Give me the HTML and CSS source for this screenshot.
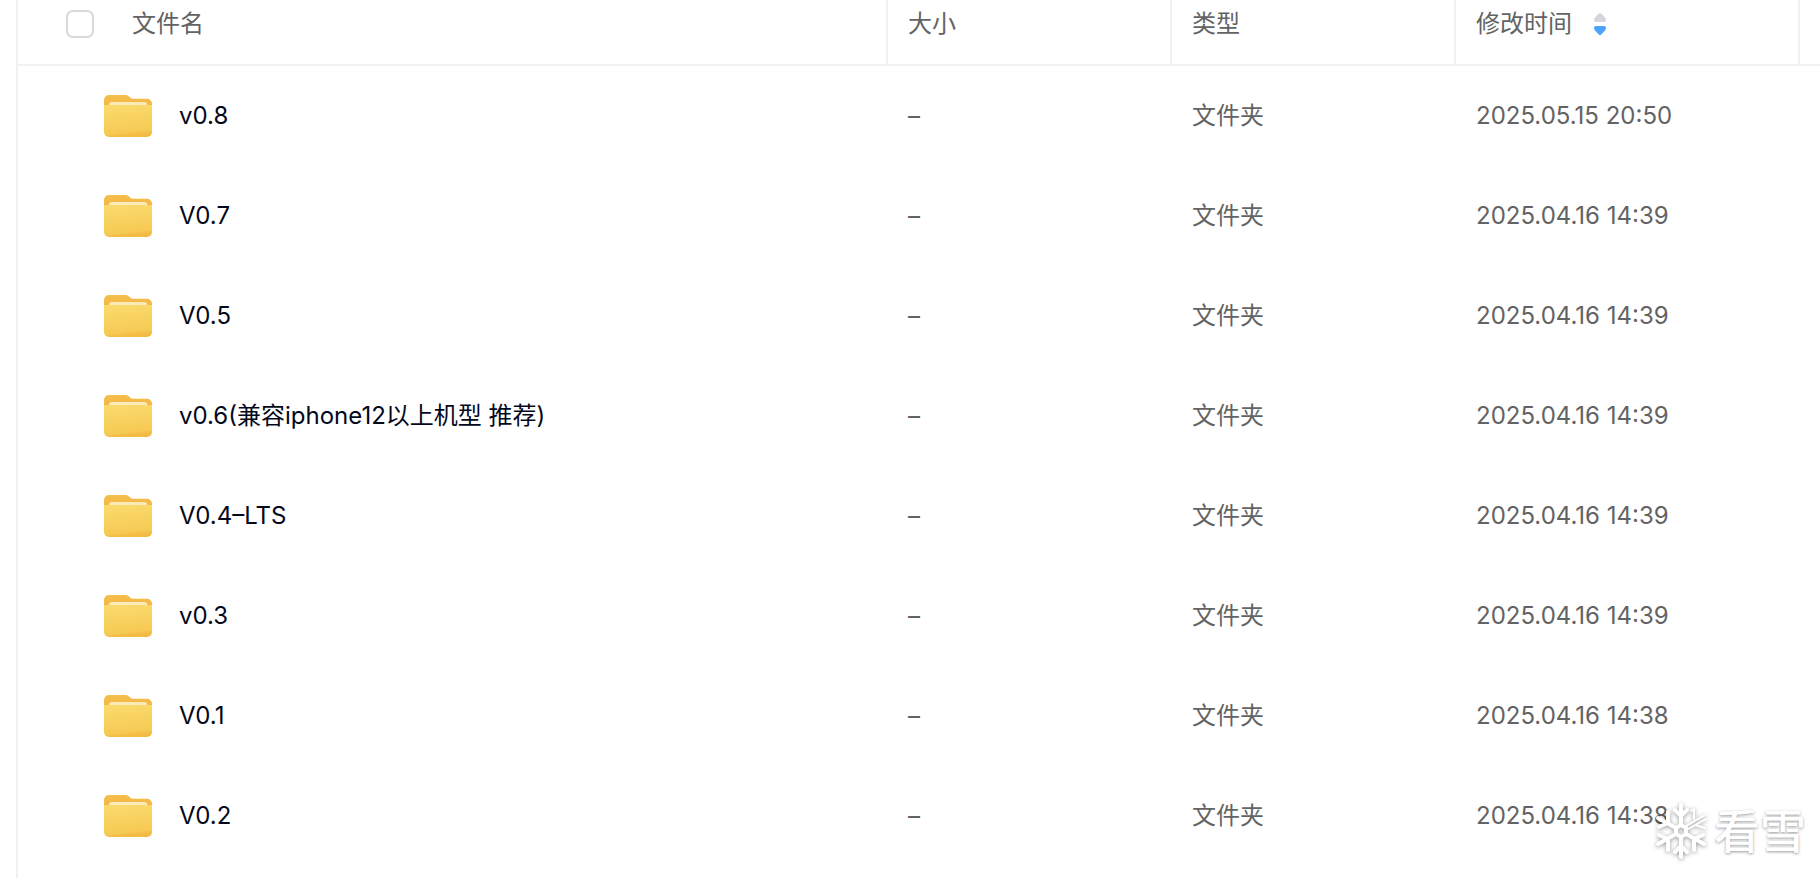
FILE: index.html
```html
<!DOCTYPE html>
<html lang="zh-CN">
<head>
    <meta charset="UTF-8">
    <meta name="viewport" content="width=device-width, initial-scale=1.0">
    <title>文件列表</title>
    <link rel="stylesheet" href="styles.css">
</head>
<body>
    <!-- shared folder icon -->
    <svg class="sprite" width="0" height="0" aria-hidden="true">
        <defs>
            <linearGradient id="folder-back" x1="0" y1="0" x2="0" y2="1">
                <stop offset="0" stop-color="#f6be4b"/>
                <stop offset="1" stop-color="#f0b040"/>
            </linearGradient>
            <linearGradient id="folder-front" x1="0" y1="0" x2="0.15" y2="1">
                <stop offset="0" stop-color="#fadb6e"/>
                <stop offset="0.9" stop-color="#f6ca54"/>
                <stop offset="1" stop-color="#f3bb45"/>
            </linearGradient>
        </defs>
        <symbol id="folder" viewBox="0 0 48 42">
            <path fill="url(#folder-back)" d="M0 5a5 5 0 0 1 5-5h16c2 0 3 .5 4.300 1.700l1.200 1.100c.7.700 1.500.9 2.500.9h14a5 5 0 0 1 5 5V20H0z"/>
            <path fill="#fcebb8" d="M5 10c0-2 1-3 3-3h32c2 0 3 1 3.500 3v3H5z"/>
            <path fill="url(#folder-front)" d="M0 10h48v27a5 5 0 0 1-5 5H5a5 5 0 0 1-5-5z"/>
        </symbol>
    </svg>

    <main class="panel">
        <table class="file-table">
            <colgroup>
                <col>
                <col class="col-size">
                <col class="col-type">
                <col class="col-time">
                <col class="col-end">
            </colgroup>
            <thead>
                <tr>
                    <th>
                        <div class="head-name">
                            <input type="checkbox" id="check-all" class="check">
                            <label for="check-all">文件名</label>
                        </div>
                    </th>
                    <th>大小</th>
                    <th>类型</th>
                    <th>
                        <button type="button" class="sort">
                            修改时间
                            <svg class="sort-icon" width="12" height="22" viewBox="0 0 12 22" aria-hidden="true">
                                <path fill="#d4d6dc" d="M4.800.6q1.200-1 2.400 0L11 4.600q1 1.100 1 2.300 0 2.100-2 2.100H2Q0 9 0 6.900 0 5.700 1 4.600z"/>
                                <path fill="#4ba3fb" d="M4.800 21.400q1.200 1 2.400 0l3.800-4q1-1.100 1-2.300 0-2.100-2-2.100H2q-2 0-2 2.100 0 1.200 1 2.300z"/>
                            </svg>
                        </button>
                    </th>
                    <th></th>
                </tr>
            </thead>
            <tbody>
                <tr>
                    <td><a href="#" class="file"><svg class="icon"><use href="#folder"/></svg>v0.8</a></td>
                    <td>–</td><td>文件夹</td><td>2025.05.15 20:50</td><td></td>
                </tr>
                <tr>
                    <td><a href="#" class="file"><svg class="icon"><use href="#folder"/></svg>V0.7</a></td>
                    <td>–</td><td>文件夹</td><td>2025.04.16 14:39</td><td></td>
                </tr>
                <tr>
                    <td><a href="#" class="file"><svg class="icon"><use href="#folder"/></svg>V0.5</a></td>
                    <td>–</td><td>文件夹</td><td>2025.04.16 14:39</td><td></td>
                </tr>
                <tr>
                    <td><a href="#" class="file"><svg class="icon"><use href="#folder"/></svg>v0.6(兼容iphone12以上机型 推荐)</a></td>
                    <td>–</td><td>文件夹</td><td>2025.04.16 14:39</td><td></td>
                </tr>
                <tr>
                    <td><a href="#" class="file"><svg class="icon"><use href="#folder"/></svg>V0.4–LTS</a></td>
                    <td>–</td><td>文件夹</td><td>2025.04.16 14:39</td><td></td>
                </tr>
                <tr>
                    <td><a href="#" class="file"><svg class="icon"><use href="#folder"/></svg>v0.3</a></td>
                    <td>–</td><td>文件夹</td><td>2025.04.16 14:39</td><td></td>
                </tr>
                <tr>
                    <td><a href="#" class="file"><svg class="icon"><use href="#folder"/></svg>V0.1</a></td>
                    <td>–</td><td>文件夹</td><td>2025.04.16 14:38</td><td></td>
                </tr>
                <tr>
                    <td><a href="#" class="file"><svg class="icon"><use href="#folder"/></svg>V0.2</a></td>
                    <td>–</td><td>文件夹</td><td>2025.04.16 14:38</td><td></td>
                </tr>
            </tbody>
        </table>
    </main>

    <div class="watermark">
        <svg class="snow" width="56" height="60" viewBox="-28 -30 56 60" aria-hidden="true">
            <g fill="none" stroke="#fff" stroke-width="4" stroke-linecap="round">
                <path d="M0-6l5 3v6l-5 3-5-3v-6z"/>
                <path d="M0-6V-26M-6-21L0-15L6-21"/>
                <path d="M0 6V26M-6 21L0 15L6 21"/>
                <path d="M-5-3L-23-13M-13-19V-8L-22-4"/>
                <path d="M-5 3L-23 13M-13 19V8L-22 4"/>
                <path d="M5 3L23 13M13 19V8L22 4"/>
            </g>
            <!-- the upper right arm is made of thin strokes -->
            <path fill="none" stroke="#fff" stroke-width="2" stroke-linecap="round" d="M5-5L24-16M7-2L25-12M10-20L13-22V-12M14-6L24-3"/>
        </svg>
        <span>看雪</span>
    </div>
</body>
</html>
```

FILE: styles.css
```css
* {
    box-sizing: border-box;
}
body {
    margin: 0;
    font-family: Inter, "Noto Sans CJK SC", sans-serif;
    font-size: 24px;
    line-height: 32px;
    color: #636363;
    background-color: #fff;
}
.sprite {
    position: absolute;
}
.panel {
    min-height: 100vh;
    margin-left: 16px;
    border-left: 2px solid #f0f1f3;
}
.file-table {
    width: 100%;
    table-layout: fixed;
    border-collapse: separate;
    border-spacing: 0;
}
.col-size, .col-type {
    width: 284px;
}
.col-time {
    width: 344px;
}
.col-end {
    width: 20px;
}
th, td {
    padding: 0 20px;
    text-align: left;
    white-space: nowrap;
}
th {
    height: 66px;
    padding-bottom: 16px;
    font-weight: normal;
    border-bottom: 2px solid #f1f1f2;
    border-right: 2px solid #f1f1f2;
}
th:last-child {
    border-right: none;
}
th:last-child, td:last-child {
    padding: 0;
}
td {
    height: 100px;
}
th:first-child {
    padding-left: 48px;
}
td:first-child {
    padding-left: 86px;
}
.head-name {
    display: flex;
    align-items: center;
    gap: 38px;
}
.check {
    appearance: none;
    width: 28px;
    height: 28px;
    margin: 0;
    border: 2px solid #d9d9d9;
    border-radius: 7px;
    background-color: #fff;
}
.sort {
    display: flex;
    align-items: center;
    gap: 22px;
    padding: 0;
    border: none;
    background: none;
    font: inherit;
    color: inherit;
    cursor: pointer;
}
.file {
    display: flex;
    align-items: center;
    gap: 27px;
    color: #03081a;
    text-decoration: none;
}
.icon {
    width: 48px;
    height: 42px;
}
.watermark {
    position: absolute;
    right: 14px;
    bottom: 17px;
    display: flex;
    align-items: center;
    gap: 5px;
    font-size: 46px;
    font-weight: 500;
    line-height: 60px;
    color: #fff;
    text-shadow: 0 1px 3px rgba(0, 0, 0, 0.4);
}
.snow {
    overflow: visible;
    filter: drop-shadow(0 1px 2px rgba(0, 0, 0, 0.4));
}
```
